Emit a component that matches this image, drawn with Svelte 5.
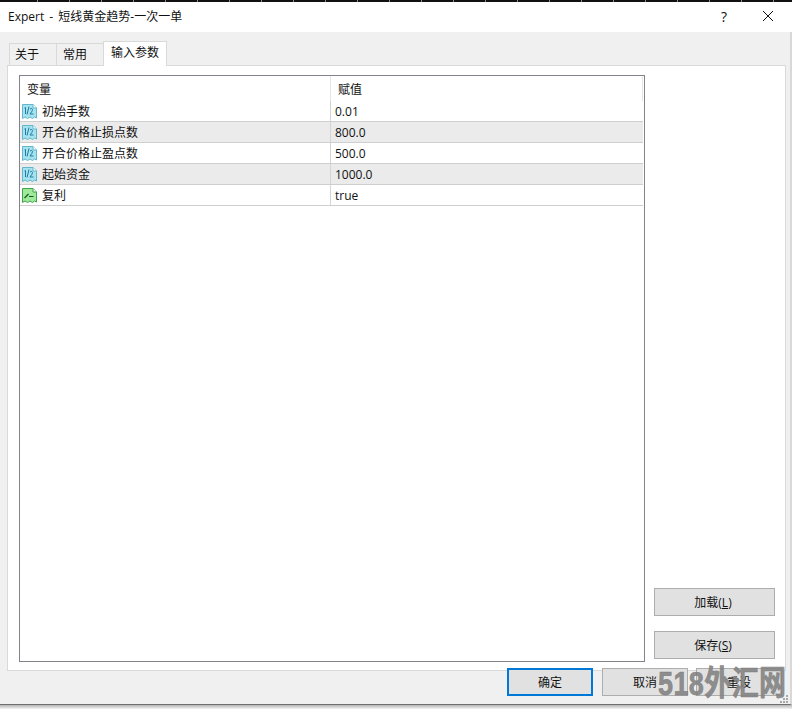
<script>
  let rows = [
    { name: "初始手数", value: "0.01", kind: "num" },
    { name: "开合价格止损点数", value: "800.0", kind: "num" },
    { name: "开合价格止盈点数", value: "500.0", kind: "num" },
    { name: "起始资金", value: "1000.0", kind: "num" },
    { name: "复利", value: "true", kind: "bool" },
  ];

  let tabs = ["关于", "常用", "输入参数"];
  let activeTab = 2;
</script>

<div class="window">
  <div class="top-strip"></div>
  <div class="titlebar">
    <span class="title">Expert - 短线黄金趋势-一次一单</span>
    <span class="help">?</span>
    <svg class="close" width="12" height="12" viewBox="0 0 12 12" aria-hidden="true">
      <path d="M1 1 L11 11 M11 1 L1 11" stroke="#111" stroke-width="1" fill="none" />
    </svg>
  </div>

  <div class="dialog">
    <div class="tabs">
      {#each tabs as tab, i}
        <div class="tab" class:active={i === activeTab}>{tab}</div>
      {/each}
    </div>

    <div class="panel">
      <div class="list">
        <div class="row head">
          <div class="cell name">变量</div>
          <div class="cell value">赋值</div>
        </div>
        {#each rows as row, i}
          <div class="row" class:odd={i % 2 === 1}>
            <div class="cell name">
              {#if row.kind === "num"}
                <svg class="icon" width="17" height="17" viewBox="0 0 17 17" aria-hidden="true">
                  <path d="M1.5 1.5 H12 L15.5 5 V15 L13.5 14 L11.5 15.5 L9 14 L6.5 15.5 L4 14 L1.5 15.5 Z" fill="#a5e3ee" stroke="#62b5cb" />
                  <path d="M12 1.5 V5 H15.5" fill="#fff" stroke="#62b5cb" />
                  <path d="M3.5 5 L4.5 4.5 V11 M8 3.5 L6 11.5 M9 6 Q11 4.5 11.5 6.5 Q11.5 8 9 11 H12.5" fill="none" stroke="#1f7aa6" stroke-width="1" />
                </svg>
              {:else}
                <svg class="icon" width="17" height="17" viewBox="0 0 17 17" aria-hidden="true">
                  <path d="M1.5 1.5 H12 L15.5 5 V15 L13.5 14 L11.5 15.5 L9 14 L6.5 15.5 L4 14 L1.5 15.5 Z" fill="#9ee99a" stroke="#3fa34a" />
                  <path d="M12 1.5 V5 H15.5" fill="#fff" stroke="#3fa34a" />
                  <path d="M3.5 11 L7.5 7 M8 9.5 H12.5" fill="none" stroke="#14591f" stroke-width="1.2" />
                </svg>
              {/if}
              <span>{row.name}</span>
            </div>
            <div class="cell value">{row.value}</div>
          </div>
        {/each}
      </div>

      <div class="side">
        <button class="btn">加载(<u>L</u>)</button>
        <button class="btn">保存(<u>S</u>)</button>
      </div>
    </div>

    <div class="footer">
      <button class="btn default">确定</button>
      <button class="btn">取消</button>
      <button class="btn">重设</button>
    </div>
  </div>
  <div class="shadow"></div>

  <div class="watermark">518外汇网</div>
  <svg class="grip" width="9" height="9" viewBox="0 0 9 9" aria-hidden="true">
    <path d="M6 0h2v2H6z M3 3h2v2H3z M6 3h2v2H6z M0 6h2v2H0z M3 6h2v2H3z M6 6h2v2H6z" fill="#a8a8a8" />
  </svg>
</div>

<style>
  :global(body) {
    margin: 0;
    background: #fff;
  }

  .window {
    position: relative;
    width: 792px;
    height: 709px;
    display: flex;
    flex-direction: column;
    overflow: hidden;
    font-family: "Open Sans", "Noto Sans CJK SC", sans-serif;
    font-size: 12px;
    color: #111;
  }

  .top-strip {
    height: 2px;
    flex: none;
    background: repeating-linear-gradient(90deg, #111 0 31px, #8a8a8a 31px 32px);
    background-position: 6px 0;
  }

  .titlebar {
    height: 30px;
    flex: none;
    background: #fff;
    display: flex;
    align-items: center;
    padding: 0 18px 0 8px;
  }

  .title {
    flex: 1;
    font-size: 12px;
    word-spacing: 2px;
    margin-top: -2px;
  }

  .help {
    margin-right: 35px;
    font-size: 14px;
    margin-top: -2px;
  }

  .close {
    margin-top: -2px;
  }

  .dialog {
    flex: 1;
    background: #f0f0f0;
    border-bottom: 1px solid #6f6f6f;
    border-right: 2px solid #d8d8d8;
    display: flex;
    flex-direction: column;
    padding: 9px 4px 0 7px;
  }

  .tabs {
    display: flex;
    height: 24px;
    padding-left: 2px;
    align-items: flex-end;
    position: relative;
    z-index: 1;
  }

  .tab {
    width: 48px;
    height: 22px;
    box-sizing: border-box;
    border: 1px solid #d9d9d9;
    border-bottom: none;
    margin-left: -1px;
    padding-left: 6px;
    line-height: 22px;
  }

  .tab:first-child {
    margin-left: 0;
    padding-left: 5px;
  }

  .tab.active {
    width: 64px;
    height: 25px;
    background: #fff;
    padding-left: 7px;
    line-height: 22px;
    margin-bottom: -1px;
  }

  .panel {
    height: 606px;
    box-sizing: border-box;
    border: 1px solid #d9d9d9;
    background: #fff;
    padding: 9px 10px 8px 11px;
    display: flex;
    gap: 9px;
  }

  .list {
    width: 626px;
    box-sizing: border-box;
    border: 1px solid #83838c;
    flex: none;
  }

  .row {
    display: flex;
    height: 21px;
    box-sizing: border-box;
    border-bottom: 1px solid #cfcfcf;
    margin-right: 1px;
  }

  .row.odd {
    background: #ebebeb;
  }

  .row.head {
    height: 25px;
    border-bottom: none;
  }

  .cell {
    display: flex;
    align-items: center;
    box-sizing: border-box;
  }

  .cell.name {
    width: 311px;
    padding-left: 1px;
    gap: 4px;
    border-right: 1px solid #d4d4d4;
  }

  .cell.value {
    flex: 1;
    padding-left: 4px;
  }

  .head .name {
    padding-left: 7px;
    border-right: 1px solid #e6e6e6;
  }

  .head .value {
    padding-left: 7px;
    border-right: 1px solid #e6e6e6;
  }

  .icon {
    flex: none;
  }

  .side {
    flex: 1;
    display: flex;
    flex-direction: column;
    justify-content: flex-end;
    gap: 15px;
    padding-bottom: 3px;
  }

  .btn {
    height: 28px;
    width: 86px;
    box-sizing: border-box;
    border: 1px solid #adadad;
    background: #e1e1e1;
    color: #111;
    font: inherit;
    padding: 0;
  }

  .side .btn {
    width: 121px;
    padding-right: 3px;
  }

  .btn.default {
    border: 2px solid #0078d7;
  }

  .footer {
    display: flex;
    gap: 9px;
    padding: 0 0 0 500px;
    margin-top: -3px;
    position: relative;
  }

  .footer .btn:last-child {
    margin-left: -1px;
  }

  .shadow {
    height: 4px;
    flex: none;
    background: linear-gradient(#b5b5b5, #f4f4f4);
  }

  .watermark {
    position: absolute;
    left: 658px;
    top: 667px;
    font-family: "Liberation Sans", "Noto Sans CJK SC", sans-serif;
    font-size: 27px;
    line-height: 34px;
    font-weight: 700;
    letter-spacing: 0.4px;
    color: rgba(130, 130, 130, 0.9);
    -webkit-text-stroke: 0.6px rgba(130, 130, 130, 0.9);
    transform: scaleY(1.25);
    white-space: nowrap;
  }

  .grip {
    position: absolute;
    left: 780px;
    top: 695px;
  }
</style>
